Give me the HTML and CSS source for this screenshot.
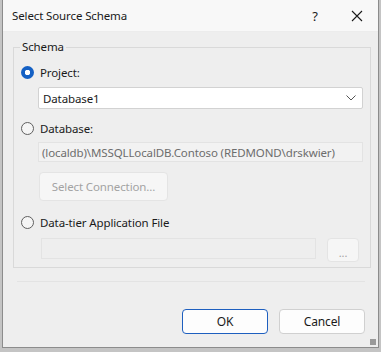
FILE: index.html
```html
<!DOCTYPE html>
<html lang="en">
<head>
    <meta charset="UTF-8">
    <title>Select Source Schema</title>
    <link rel="stylesheet" href="styles.css">
</head>
<body>
    <div class="dialog">
        <!-- Title Bar -->
        <div class="titlebar">
            <span class="title">Select Source Schema</span>
            <span class="help">?</span>
            <span class="close">
                <svg width="12" height="12" viewBox="0 0 12 12">
                    <path d="M1 1 L11 11 M11 1 L1 11" stroke="#1a1a1a" stroke-width="1.1" fill="none"/>
                </svg>
            </span>
        </div>

        <div class="content">
            <!-- Schema Group -->
            <div class="group">
                <span class="legend">Schema</span>

                <label class="radio-row first">
                    <span class="radio checked"></span>
                    <span>Project:</span>
                </label>
                <div class="combo">
                    <span>Database1</span>
                    <svg width="10" height="6" viewBox="0 0 10 6">
                        <path d="M0.5 0.5 L5 5 L9.5 0.5" stroke="#555" stroke-width="1" fill="none"/>
                    </svg>
                </div>

                <label class="radio-row second">
                    <span class="radio"></span>
                    <span>Database:</span>
                </label>
                <div class="textbox disabled">(localdb)\MSSQLLocalDB.Contoso (REDMOND\drskwier)</div>
                <div class="btn disabled connect">Select Connection...</div>

                <label class="radio-row third">
                    <span class="radio"></span>
                    <span>Data-tier Application File</span>
                </label>
                <div class="file-row">
                    <div class="textbox file"></div>
                    <div class="btn disabled browse">...</div>
                </div>
            </div>

            <div class="separator"></div>

            <!-- Buttons -->
            <div class="actions">
                <div class="btn primary">OK</div>
                <div class="btn">Cancel</div>
            </div>
        </div>
        <div class="grip"></div>
    </div>
</body>
</html>
```

FILE: styles.css
```css
body {
    margin: 0;
    height: 352px;
    overflow: hidden;
    background: #c4c4c4;
    font-family: "Noto Sans", sans-serif;
    font-size: 11.5px;
    letter-spacing: -0.12px;
    color: #1a1a1a;
}

.dialog {
    position: relative;
    margin-left: 2px;
    width: 375px;
    height: 347px;
    background: #eeeeee;
    border: 1px solid #8c8c8c;
    border-top: none;
}

/* Title Bar */
.titlebar {
    display: flex;
    align-items: center;
    height: 31px;
    background: #f8f8f8;
    border-bottom: 1px solid #ececec;
}

.title {
    margin-left: 9px;
    flex: 1;
}

.help {
    width: 20px;
    text-align: center;
    font-size: 13px;
    margin-right: 26px;
}

.close {
    display: flex;
    margin-right: 15px;
}

.content {
    padding: 15px 7px 0 10px;
}

/* Group box */
.group {
    position: relative;
    border: 1px solid #d9d9d9;
    padding: 0 7px 5px 7px;
}

.legend {
    position: absolute;
    top: -9px;
    left: 6px;
    padding: 0 2px;
    background: #eeeeee;
    line-height: 16px;
}

.radio-row {
    display: flex;
    align-items: center;
    gap: 6px;
    height: 16px;
}

.radio-row.first { margin-top: 16px; }
.radio-row.second { margin-top: 11px; }
.radio-row.third { margin-top: 13px; }

.radio {
    width: 11px;
    height: 11px;
    border: 1px solid #5f5f5f;
    border-radius: 50%;
    background: #f5f5f5;
}

.radio.checked {
    width: 13px;
    height: 13px;
    border: none;
    background: radial-gradient(circle, #fff 0, #fff 2.5px, #1460c4 3px);
}

.combo {
    display: flex;
    align-items: center;
    justify-content: space-between;
    margin: 7px 0 0 17px;
    height: 20px;
    padding: 0 6px 0 4px;
    background: #fff;
    border: 1px solid #d2d2d2;
    border-radius: 2px;
}

.textbox {
    height: 20px;
    line-height: 19px;
    box-sizing: border-box;
    border: 1px solid #e3e3e3;
    background: #f2f2f2;
    padding: 0 3px;
    white-space: nowrap;
}

.textbox.disabled {
    margin: 6px 0 0 17px;
    color: #6d6d6d;
}

.btn {
    display: flex;
    align-items: center;
    justify-content: center;
    box-sizing: border-box;
    background: #fdfdfd;
    border: 1px solid #d0d0d0;
    border-radius: 4px;
}

.btn.disabled {
    background: #f6f6f6;
    border-color: #e4e4e4;
    color: #a3a3a3;
}

.connect {
    margin: 10px 0 0 18px;
    width: 129px;
    height: 29px;
}

.file-row {
    display: flex;
    align-items: flex-start;
    margin: 8px 0 0 20px;
}

.textbox.file {
    width: 275px;
    height: 21px;
    border-color: #e3e3e3;
    background: #eeeeee;
}

.browse {
    margin-left: 11px;
    width: 32px;
    height: 24px;
    font-size: 11px;
    padding-top: 4px;
}

.separator {
    margin: 13px 6px 0 4px;
    border-top: 1px solid #e3e3e3;
}

.actions {
    display: flex;
    justify-content: flex-end;
    gap: 11px;
    margin: 27px 6px 0 0;
}

.actions .btn {
    width: 86px;
    height: 25px;
    font-size: 12px;
}

.btn.primary {
    border: 1px solid #1e5fbf;
}

.grip {
    position: absolute;
    right: 2px;
    bottom: 2px;
    width: 6px;
    height: 6px;
    background: radial-gradient(circle, #9a9a9a 0.8px, transparent 1px) 0 0 / 2px 2px;
}
```
